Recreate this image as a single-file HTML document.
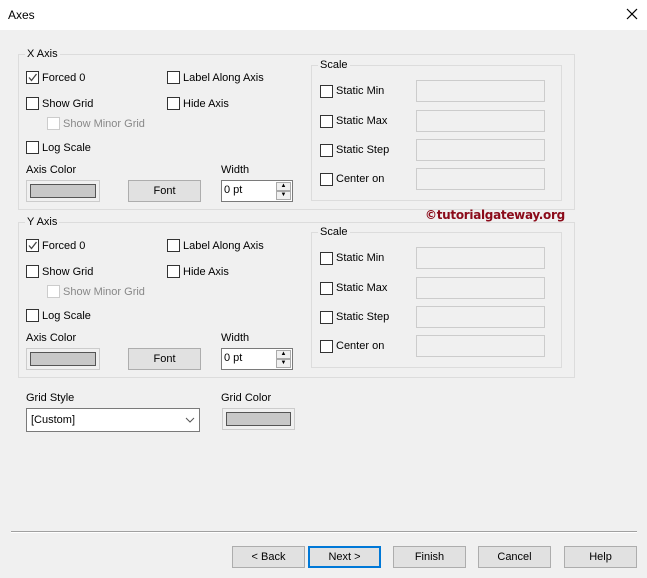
<!DOCTYPE html>
<html><head><style>
*{margin:0;padding:0;box-sizing:border-box}
body{width:647px;height:578px;background:#f0f0f0;font-family:"Liberation Sans",sans-serif;font-size:11px;color:#000;position:relative;overflow:hidden}
.a{position:absolute;white-space:nowrap}
.title{left:0;top:0;width:647px;height:30px;background:#fff}
.grp{position:absolute;border:1px solid #dcdcdc}
.lbl{position:absolute;background:#f0f0f0;padding:0 2px;top:-8px;left:6px;line-height:14px}
.cb{position:absolute;width:13px;height:13px;border:1px solid #333;background:#fff}
.cb.dis{border-color:#ccc}
.t{position:absolute;line-height:14px;white-space:nowrap}
.g{color:#888}
.tb{position:absolute;width:129px;height:22px;border:1px solid #ccc;background:#f0f0f0}
.col{position:absolute;border:1px solid #ccc;background:#f0f0f0;padding:3px}
.col div{width:100%;height:100%;background:#c8c8c8;border:1px solid #555}
.btn{position:absolute;height:22px;background:#e1e1e1;border:1px solid #adadad;text-align:center;line-height:20px}
.spin{position:absolute;width:72px;height:22px;border:1px solid #7a7a7a;background:#fff}
.spin span{position:absolute;left:2px;top:3px}
.sb{position:absolute;right:1px;width:15px;height:9px;background:#f0f0f0;border:1px solid #aaa;font-size:6px;line-height:7px;text-align:center}
</style></head><body>
<div class="a title"></div>
<div class="a" style="left:8px;top:8px;font-size:12px">Axes</div>
<svg class="a" style="left:626px;top:8px" width="12" height="12"><path d="M1 1L11 11M11 1L1 11" stroke="#000" stroke-width="1.2"/></svg>

<div class="grp" style="left:18px;top:54px;width:557px;height:156px"><div class="lbl">X Axis</div></div>
<div class="grp" style="left:18px;top:222px;width:557px;height:156px"><div class="lbl">Y Axis</div></div>

<div id="x"></div>
<script>
function sec(o){
 var h='';
 h+=`<div class="cb" style="left:26px;top:${71+o}px"></div><svg class="a" style="left:27px;top:${72+o}px" width="11" height="11"><path d="M2 5.5L4.5 8.5L9.5 2" stroke="#444" stroke-width="1.3" fill="none"/></svg><div class="t" style="left:42px;top:${71+o}px">Forced 0</div>`;
 h+=`<div class="cb" style="left:167px;top:${71+o}px"></div><div class="t" style="left:183px;top:${71+o}px">Label Along Axis</div>`;
 h+=`<div class="cb" style="left:26px;top:${97+o}px"></div><div class="t" style="left:42px;top:${97+o}px">Show Grid</div>`;
 h+=`<div class="cb" style="left:167px;top:${97+o}px"></div><div class="t" style="left:183px;top:${97+o}px">Hide Axis</div>`;
 h+=`<div class="cb dis" style="left:47px;top:${117+o}px"></div><div class="t g" style="left:63px;top:${117+o}px">Show Minor Grid</div>`;
 h+=`<div class="cb" style="left:26px;top:${141+o}px"></div><div class="t" style="left:42px;top:${141+o}px">Log Scale</div>`;
 h+=`<div class="t" style="left:26px;top:${163+o}px">Axis Color</div>`;
 h+=`<div class="col" style="left:26px;top:${180+o}px;width:74px;height:22px"><div></div></div>`;
 h+=`<div class="btn" style="left:128px;top:${180+o}px;width:73px">Font</div>`;
 h+=`<div class="t" style="left:221px;top:${163+o}px">Width</div>`;
 h+=`<div class="spin" style="left:221px;top:${180+o}px"><span>0 pt</span><div class="sb" style="top:1px">▲</div><div class="sb" style="top:10px">▼</div></div>`;
 var so=o>0?167:0;
 h+=`<div class="grp" style="left:311px;top:${65+so}px;width:251px;height:136px"><div class="lbl">Scale</div></div>`;
 var rows=[['Static Min',91],['Static Max',121],['Static Step',150],['Center on',179]];
 rows.forEach(r=>{var y=r[1]+so;h+=`<div class="cb" style="left:320px;top:${y-6}px"></div><div class="t" style="left:336px;top:${y-7}px">${r[0]}</div><div class="tb" style="left:416px;top:${y-11}px"></div>`});
 return h;
}
document.getElementById('x').innerHTML=sec(0)+sec(168);
</script>
<div class="a" style="left:425px;top:208px;font-family:'DejaVu Sans',sans-serif;font-weight:bold;font-size:12px;color:#8b0b1a;letter-spacing:-0.3px">©tutorialgateway.org</div>

<div class="t" style="left:26px;top:391px">Grid Style</div>
<div class="a" style="left:26px;top:408px;width:174px;height:24px;border:1px solid #7a7a7a;background:#fff"><span class="a" style="left:4px;top:5px">[Custom]</span><svg class="a" style="left:158px;top:8px" width="10" height="6"><path d="M1 1L5 5L9 1" stroke="#555" fill="none"/></svg></div>
<div class="t" style="left:221px;top:391px">Grid Color</div>
<div class="col" style="left:222px;top:408px;width:73px;height:22px"><div></div></div>

<div class="a" style="left:11px;top:531px;width:626px;height:2px;border-top:1px solid #a0a0a0;border-bottom:1px solid #fff"></div>
<div class="btn" style="left:232px;top:546px;width:73px">&lt; Back</div>
<div class="btn" style="left:308px;top:546px;width:73px;border:2px solid #0078d7;line-height:18px">Next &gt;</div>
<div class="btn" style="left:393px;top:546px;width:73px">Finish</div>
<div class="btn" style="left:478px;top:546px;width:73px">Cancel</div>
<div class="btn" style="left:564px;top:546px;width:73px">Help</div>
</body></html>
